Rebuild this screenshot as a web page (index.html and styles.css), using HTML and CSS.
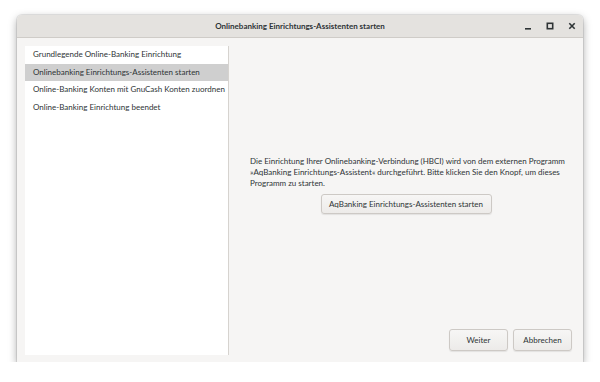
FILE: index.html
```html
<!DOCTYPE html>
<html lang="de">
<head>
<meta charset="utf-8">
<link rel="stylesheet" href="styles.css">
</head>
<body>
<div class="window">
  <div class="titlebar">
    <div class="title">Onlinebanking Einrichtungs-Assistenten starten</div>
    <div class="controls">
      <svg class="ctl" width="10" height="10" viewBox="0 0 10 10"><rect x="2" y="7" width="6" height="1.6" fill="#2e3436"/></svg>
      <svg class="ctl" width="10" height="10" viewBox="0 0 10 10"><rect x="2.3" y="2.3" width="5.4" height="5.4" fill="none" stroke="#2e3436" stroke-width="1.6"/></svg>
      <svg class="ctl" width="10" height="10" viewBox="0 0 10 10"><path d="M2.3 2.3 L7.7 7.7 M7.7 2.3 L2.3 7.7" stroke="#2e3436" stroke-width="1.6"/></svg>
    </div>
  </div>
  <div class="body">
    <div class="sidebar">
      <div class="step">Grundlegende Online-Banking Einrichtung</div>
      <div class="step selected">Onlinebanking Einrichtungs-Assistenten starten</div>
      <div class="step">Online-Banking Konten mit GnuCash Konten zuordnen</div>
      <div class="step">Online-Banking Einrichtung beendet</div>
    </div>
    <div class="pane">
      <div class="main">
        <p class="info">Die Einrichtung Ihrer Onlinebanking-Verbindung (HBCI) wird von dem externen Programm »AqBanking Einrichtungs-Assistent« durchgeführt. Bitte klicken Sie den Knopf, um dieses Programm zu starten.</p>
        <div class="launch-row"><button class="btn launch">AqBanking Einrichtungs-Assistenten starten</button></div>
      </div>
      <div class="actions">
        <button class="btn action">Weiter</button>
        <button class="btn action">Abbrechen</button>
      </div>
    </div>
  </div>
</div>
</body>
</html>
```
FILE: styles.css
```css
html, body {
  margin: 0;
  padding: 0;
  background: #ffffff;
}
body {
  font-family: Lato, "Noto Sans", sans-serif;
  font-size: 8px;
  color: #2e3436;
}
.window {
  margin: 15px 0 0 17px;
  width: 566px;
  height: 347px;
  background: #f6f5f4;
  border-radius: 5px 5px 0 0;
  box-shadow: 0 3px 9px rgba(0,0,0,0.35), 0 0 0 1px rgba(0,0,0,0.08);
  display: flex;
  flex-direction: column;
  overflow: hidden;
}
.titlebar {
  height: 22px;
  flex: none;
  background: #e4e2df;
  border-bottom: 1px solid #cfccc8;
  display: flex;
  align-items: center;
  justify-content: center;
  position: relative;
}
.title {
  font-weight: bold;
  font-size: 8px;
  color: #2e3436;
}
.controls {
  position: absolute;
  right: 6px;
  top: 6px;
  display: flex;
  gap: 12px;
}
.ctl { display: block; }
.body {
  flex: 1;
  display: flex;
  padding: 8px 0 7px 8px;
  min-height: 0;
}
.sidebar {
  width: 203px;
  flex: none;
  background: #ffffff;
  border-right: 1px solid #d6d3cf;
  display: flex;
  flex-direction: column;
}
.step {
  height: 17.5px;
  line-height: 17.5px;
  padding-left: 8px;
  white-space: nowrap;
  color: #2e3436;
}
.step.selected {
  background: #cfcfcf;
}
.pane {
  flex: 1;
  display: flex;
  flex-direction: column;
  padding: 0 12px 4px 21px;
}
.main {
  flex: 1;
  display: flex;
  flex-direction: column;
  justify-content: center;
  padding-bottom: 6px;
}
.info {
  margin: 0;
  line-height: 11px;
  width: 322px;
}
.launch-row {
  display: flex;
  justify-content: center;
  margin-top: 5px;
  padding-right: 10px;
}
.btn {
  font-family: inherit;
  font-size: 8px;
  color: #2e3436;
  background: linear-gradient(#f7f6f5, #edebe9);
  border: 1px solid #cdc9c5;
  border-radius: 3px;
  box-shadow: 0 1px 1px rgba(0,0,0,0.08);
  padding: 0;
}
.launch {
  width: 171px;
  height: 20px;
}
.actions {
  display: flex;
  justify-content: flex-end;
  gap: 5px;
}
.action {
  width: 59px;
  height: 22px;
}
```
